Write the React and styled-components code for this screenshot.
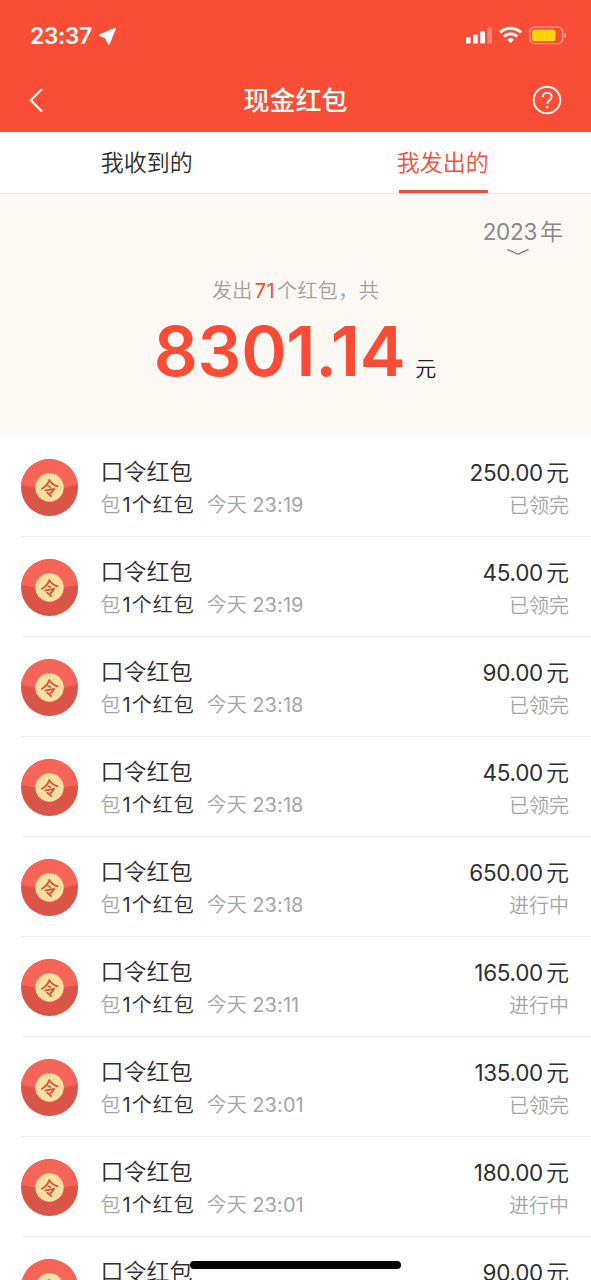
import React from "react";
import styled, { createGlobalStyle } from "styled-components";

const packets = [
  { time: "23:19", amount: "250.00", done: true },
  { time: "23:19", amount: "45.00", done: true },
  { time: "23:18", amount: "90.00", done: true },
  { time: "23:18", amount: "45.00", done: true },
  { time: "23:18", amount: "650.00", done: false },
  { time: "23:11", amount: "165.00", done: false },
  { time: "23:01", amount: "135.00", done: true },
  { time: "23:01", amount: "180.00", done: false },
  { time: "23:01", amount: "90.00", done: true },
];

const StatusIcons = () => (
  <svg width="104" height="22" viewBox="0 0 104 22" fill="none">
    <rect x="1" y="12" width="4.6" height="6.4" rx="1.2" fill="#fff" />
    <rect x="8" y="9.5" width="4.8" height="8.9" rx="1.2" fill="#fff" />
    <rect x="15.2" y="6" width="4.8" height="12.4" rx="1.2" fill="#fff" />
    <rect x="22.4" y="2.5" width="4.6" height="15.9" rx="1.2" fill="#fff" opacity="0.3" />
    <g stroke="#fff" strokeWidth="3">
      <path d="M35.200 7.400a15.200 15.200 0 0 1 20.800 0" />
      <path d="M39 11.500a9.600 9.600 0 0 1 13.200 0" />
    </g>
    <path d="M42.300 14.600a4.900 4.900 0 0 1 6.600 0L45.600 18.300Z" fill="#fff" />
    <rect x="64.7" y="2.2" width="33" height="16.4" rx="5" stroke="#fff" strokeOpacity="0.5" strokeWidth="1.3" />
    <rect x="67" y="4.5" width="23.5" height="11.8" rx="2.8" fill="#fcd20c" />
    <path d="M99.500 7.800c2.200 1 2.200 4.400 0 5.400Z" fill="#fff" fillOpacity="0.55" />
  </svg>
);

const PacketIcon = () => (
  <svg width="57" height="57" viewBox="0 0 57 57">
    <circle cx="28.5" cy="28.5" r="28.5" fill="#da5547" />
    <path d="M0.200 25.500a28.500 28.500 0 0 1 56.600 0Q28.500 34 0.200 25.500Z" fill="#f66557" />
    <circle cx="28.5" cy="28.5" r="14.2" fill="#f9dfa0" />
    <g fill="none" stroke="#d0583a" strokeWidth="1.8">
      <path d="M20.300 30.200Q26 27 28.300 21.300Q31.500 26 37.300 27.700" />
      <path d="M26.500 26.800l3.600 1.700" />
      <path d="M23.500 31.600l9.400-1.600q-1 3-4 4.600" />
      <path d="M25.800 33.300l5 4.300" />
    </g>
  </svg>
);

const Packet = ({ time, amount, done }) => (
  <Row>
    <PacketIcon />
    <Column>
      <Name>口令红包</Name>
      <Detail>
        包<Count>1个红包</Count>
        <Time>
          今天 <Clock>{time}</Clock>
        </Time>
      </Detail>
    </Column>
    <Column $right>
      <Name>
        <Digits>{amount}</Digits>元
      </Name>
      <Detail>{done ? "已领完" : "进行中"}</Detail>
    </Column>
  </Row>
);

export default function App() {
  return (
    <Screen>
      <GlobalStyle />
      <StatusBar>
        <StatusTime>
          23:37
          <svg width="19" height="19" viewBox="0 0 19 19">
            <path
              d="M17 1.800 1.700 8.200 7.900 10.600 10.800 16.800Z"
              fill="#fff"
              stroke="#fff"
              strokeWidth="1.8"
              strokeLinejoin="round"
            />
          </svg>
        </StatusTime>
        <StatusIcons />
      </StatusBar>
      <NavBar>
        <svg width="30" height="30" viewBox="0 0 30 30" fill="none">
          <path d="M13 4 1.800 15.200 13 26.500" stroke="#fff" strokeWidth="2.2" />
        </svg>
        <Title>现金红包</Title>
        <svg width="30" height="30" viewBox="0 0 30 30" fill="none" stroke="#fff">
          <circle cx="15" cy="15" r="13.3" strokeWidth="1.9" />
          <path
            d="M10.700 12.200c0-2.600 1.900-4.300 4.500-4.300s4.400 1.600 4.400 4c0 3.300-4.300 3.300-4.300 6.900"
            strokeWidth="1.9"
          />
          <circle cx="15.3" cy="22.2" r="1.3" fill="#fff" stroke="none" />
        </svg>
      </NavBar>
      <Tabs>
        <Tab>我收到的</Tab>
        <Tab $active>我发出的</Tab>
      </Tabs>
      <Summary>
        <Year>
          <span>
            <Digits>2023</Digits>年
          </span>
          <Chevron width="24" height="8" viewBox="0 0 24 8" fill="none">
            <path d="M1.500 1.500 12 6.300 22.500 1.500" stroke="#888" strokeWidth="1.5" />
          </Chevron>
        </Year>
        <Sent>
          发出<Highlight>71</Highlight>个红包，共
        </Sent>
        <Total>
          <Amount>8301.14</Amount>
          <Unit>元</Unit>
        </Total>
      </Summary>
      <List>
        {packets.map((packet, i) => (
          <Packet key={i} {...packet} />
        ))}
      </List>
      <HomeIndicator />
    </Screen>
  );
}

const GlobalStyle = createGlobalStyle`
  * {
    box-sizing: border-box;
  }
  body {
    margin: 0;
    background-color: #fff;
  }
  svg {
    display: block;
    flex-shrink: 0;
  }
`;

const Screen = styled.div`
  position: relative;
  width: 591px;
  height: 1280px;
  overflow: hidden;
  background-color: #fff;
  color: #2e2e2e;
  font-family: Inter, "Noto Sans CJK SC DemiLight", "Noto Sans CJK SC", sans-serif;
  font-weight: 400;
`;

const StatusBar = styled.div`
  display: flex;
  justify-content: space-between;
  align-items: center;
  height: 70px;
  padding: 2px 22px 0 30px;
  background-color: #f94d35;
`;

const StatusTime = styled.div`
  display: flex;
  align-items: center;
  gap: 6px;
  color: #fff;
  font-size: 23px;
  font-weight: 600;
  line-height: 28px;
  letter-spacing: -0.5px;
`;

const NavBar = styled.div`
  display: flex;
  justify-content: space-between;
  align-items: center;
  height: 62px;
  padding: 0 29px 2px;
  background-color: #f94d35;
`;

const Title = styled.h1`
  margin: 0;
  padding-bottom: 2px;
  color: #fff;
  font-family: "Noto Sans CJK SC", sans-serif;
  font-size: 26px;
  font-weight: 500;
  line-height: 36px;
`;

const Tabs = styled.div`
  display: flex;
  height: 62px;
  border-bottom: 1px solid #e9e7e3;
`;

const Tab = styled.div`
  display: flex;
  justify-content: center;
  flex: 1;
  padding-right: 2px;
  font-size: 23px;
  line-height: 63px;
  height: 61px;
  color: ${({ $active }) => ($active ? "#f2503c" : "#2e2e2e")};

  &::after {
    content: "";
    display: ${({ $active }) => ($active ? "block" : "none")};
    align-self: flex-end;
    width: 89px;
    height: 3px;
    margin-left: -90px;
    background-color: #e8503f;
  }
`;

const Summary = styled.div`
  display: flex;
  flex-direction: column;
  align-items: center;
  height: 243px;
  background-color: #fcf8f4;
`;

const Year = styled.div`
  display: flex;
  flex-direction: column;
  align-self: flex-end;
  align-items: center;
  height: 81px;
  padding: 22px 28px 0 0;
  color: #888;
  font-size: 23px;
  line-height: 32px;
`;

const Chevron = styled.svg`
  margin-right: 9px;
`;

const Digits = styled.span`
  margin-right: 3px;
  font-size: 22.5px;
  letter-spacing: -0.3px;
`;

const Sent = styled.div`
  color: #a3a19f;
  font-size: 20px;
  line-height: 32px;
  letter-spacing: 0.4px;
`;

const Highlight = styled.span`
  margin: 0 2px;
  color: #e8503f;
`;

const Total = styled.div`
  display: flex;
  align-items: baseline;
  gap: 10px;
  padding: 4px 1px 0 0;
  line-height: 80px;
`;

const Amount = styled.span`
  color: #fa4b34;
  font-size: 69px;
  font-weight: 600;
  letter-spacing: -0.3px;
`;

const Unit = styled.span`
  color: #222;
  font-size: 21px;
`;

const List = styled.div`
  display: flex;
  flex-direction: column;
  padding-left: 21px;
`;

const Row = styled.div`
  display: flex;
  align-items: center;
  height: 100px;
  padding: 1px 22px 0 0;
  border-bottom: 1px solid #f0f0f0;
`;

const Column = styled.div`
  display: flex;
  flex-direction: column;
  margin-left: ${({ $right }) => ($right ? "auto" : "22.5px")};
  align-items: ${({ $right }) => ($right ? "flex-end" : "flex-start")};
  padding-top: 3px;
`;

const Name = styled.div`
  font-size: 23px;
  line-height: 33px;
`;

const Detail = styled.div`
  color: #a5a5a5;
  font-size: 20px;
  line-height: 32px;
`;

const Count = styled.span`
  margin-left: 2px;
  color: #2e2e2e;
  letter-spacing: 1px;
`;

const Time = styled.span`
  margin-left: 12px;
`;

const Clock = styled.span`
  letter-spacing: 0.1px;
`;

const HomeIndicator = styled.div`
  position: absolute;
  left: 190px;
  bottom: 11px;
  width: 211px;
  height: 8px;
  border-radius: 4px;
  background-color: #000;
`;
